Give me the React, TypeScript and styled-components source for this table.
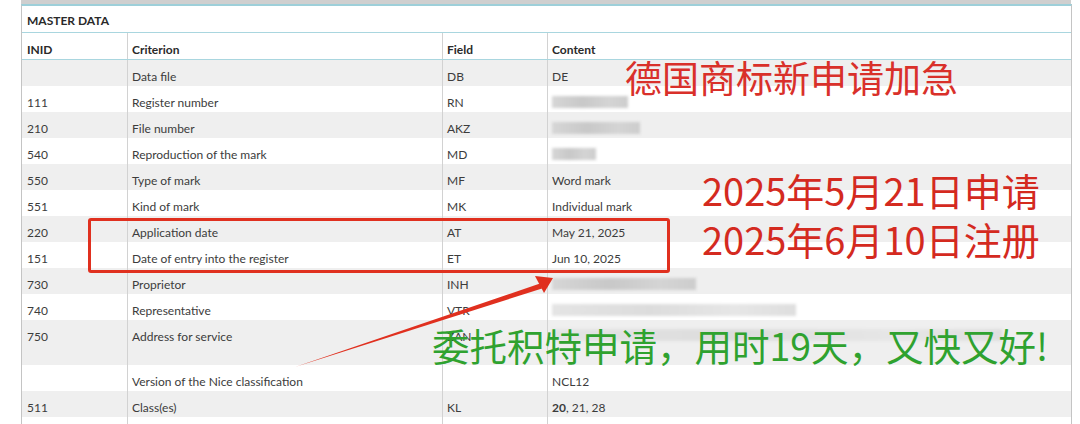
import React from 'react';
import styled, { createGlobalStyle } from 'styled-components';

const GlobalStyle = createGlobalStyle`
    html, body {
        margin: 0;
        padding: 0;
        background: #ffffff;
    }

    body {
        font-family: Lato, "Open Sans", "Liberation Sans", sans-serif;
        color: #3c3c3c;
    }
`;

const Page = styled.div`
    position: relative;
    width: 1080px;
    height: 424px;
    overflow: hidden;
    background: #ffffff;
`;

const TopBar = styled.div`
    height: 4px;
    margin-left: 21px;
    width: 1050px;
    background: #cfcfcf;
`;

const Table = styled.div`
    margin-left: 21px;
    width: 1049px;
    border-top: 2px solid #9dcfd9;
    border-left: 1px solid #c4c4c4;
    border-right: 1px solid #c4c4c4;
`;

const Title = styled.div`
    display: flex;
    align-items: center;
    height: 27px;
    padding: 3px 0 0 5px;
    box-sizing: border-box;
    font-size: 12px;
    font-weight: 700;
    color: #2a2a2a;
    border-bottom: 1px solid #a9d6df;
`;

const Row = styled.div<{ $shade?: boolean; $height?: number; $head?: boolean }>`
    display: grid;
    grid-template-columns: 105px 315px 105px 1fr;
    height: ${({ $height }) => $height ?? 26}px;
    background: ${({ $shade }) => ($shade ? '#efefef' : '#ffffff')};
    font-size: 12px;
    font-weight: ${({ $head }) => ($head ? 700 : 400)};
    color: ${({ $head }) => ($head ? '#2a2a2a' : '#3c3c3c')};
    border-bottom: ${({ $head }) => ($head ? '1px solid #a9d6df' : 'none')};
`;

const Cell = styled.div<{ $top?: boolean }>`
    display: flex;
    align-items: ${({ $top }) => ($top ? 'flex-start' : 'center')};
    padding: ${({ $top }) => ($top ? '9px 4px 0 5px' : '6px 4px 0 5px')};
    box-sizing: border-box;
    white-space: nowrap;

    & + & {
        border-left: 1px solid #d2d2d2;
        padding-left: 4px;
    }
`;

const Blur = styled.span<{ $w: number; $light?: boolean }>`
    display: inline-block;
    width: ${({ $w }) => $w}px;
    height: 12px;
    background: linear-gradient(
        90deg,
        ${({ $light }) => ($light ? '#e4e4e4' : '#d6d6d6')},
        ${({ $light }) => ($light ? '#dcdcdc' : '#c8c8c8')} 40%,
        ${({ $light }) => ($light ? '#e6e6e6' : '#d4d4d4')} 75%,
        ${({ $light }) => ($light ? '#dedede' : '#cdcdcd')}
    );
    filter: blur(1.5px);
`;

const Layer = styled.div`
    position: absolute;
    inset: 0;
    pointer-events: none;
`;

const Note = styled.div<{ $x: number; $y: number; $size: number; $color: string }>`
    position: absolute;
    left: ${({ $x }) => $x}px;
    top: ${({ $y }) => $y}px;
    font-family: "Noto Sans CJK SC", "Noto Sans", sans-serif;
    font-size: ${({ $size }) => $size}px;
    line-height: 1;
    color: ${({ $color }) => $color};
    white-space: nowrap;
`;

const Frame = styled.div`
    position: absolute;
    left: 88px;
    top: 218px;
    width: 576px;
    height: 49px;
    border: 3px solid #e0301f;
    border-radius: 3px;
`;

const Arrow = styled.svg`
    position: absolute;
    left: 0;
    top: 0;
`;

type Item = {
    inid?: string;
    criterion: string;
    field: string;
    content?: React.ReactNode;
    height?: number;
    top?: boolean;
};

const rows: Item[] = [
    { criterion: 'Data file', field: 'DB', content: 'DE' },
    { inid: '111', criterion: 'Register number', field: 'RN', content: <Blur $w={76} /> },
    { inid: '210', criterion: 'File number', field: 'AKZ', content: <Blur $w={88} /> },
    { inid: '540', criterion: 'Reproduction of the mark', field: 'MD', content: <Blur $w={44} /> },
    { inid: '550', criterion: 'Type of mark', field: 'MF', content: 'Word mark' },
    { inid: '551', criterion: 'Kind of mark', field: 'MK', content: 'Individual mark' },
    { inid: '220', criterion: 'Application date', field: 'AT', content: 'May 21, 2025' },
    { inid: '151', criterion: 'Date of entry into the register', field: 'ET', content: 'Jun 10, 2025' },
    { inid: '730', criterion: 'Proprietor', field: 'INH', content: <Blur $w={144} /> },
    { inid: '740', criterion: 'Representative', field: 'VTR', content: <Blur $w={244} $light /> },
    {
        inid: '750',
        criterion: 'Address for service',
        field: 'ZAN',
        content: <Blur $w={450} $light />,
        height: 45,
        top: true,
    },
    { criterion: 'Version of the Nice classification', field: '', content: 'NCL12' },
    {
        inid: '511',
        criterion: 'Class(es)',
        field: 'KL',
        content: (
            <span>
                <b>20</b>, 21, 28
            </span>
        ),
    },
    { criterion: '', field: '', content: '' },
];

const App: React.FC = () => (
    <Page>
        <GlobalStyle />
        <TopBar />
        <Table>
            <Title>MASTER DATA</Title>
            <Row $head>
                <Cell>INID</Cell>
                <Cell>Criterion</Cell>
                <Cell>Field</Cell>
                <Cell>Content</Cell>
            </Row>
            {rows.map((row, i) => (
                <Row key={i} $shade={i % 2 === 0} $height={row.height}>
                    <Cell $top={row.top}>{row.inid}</Cell>
                    <Cell $top={row.top}>{row.criterion}</Cell>
                    <Cell $top={row.top}>{row.field}</Cell>
                    <Cell $top={row.top}>{row.content}</Cell>
                </Row>
            ))}
        </Table>

        <Layer>
            <Frame />
            <Arrow width="1080" height="424" viewBox="0 0 1080 424">
                <polygon points="295,367 540,283.5 542,288.5" fill="#e0301f" />
                <polygon points="553,278 535,276 544,293" fill="#e0301f" />
            </Arrow>
            <Note $x={625} $y={59} $size={37} $color="#d9302a">
                德国商标新申请加急
            </Note>
            <Note $x={702} $y={171} $size={38} $color="#d42a1f">
                2025年5月21日申请
            </Note>
            <Note $x={702} $y={220} $size={38} $color="#d42a1f">
                2025年6月10日注册
            </Note>
            <Note $x={432} $y={326} $size={37.5} $color="#2fa22f">
                委托积特申请，用时19天，又快又好!
            </Note>
        </Layer>
    </Page>
);

export default App;
